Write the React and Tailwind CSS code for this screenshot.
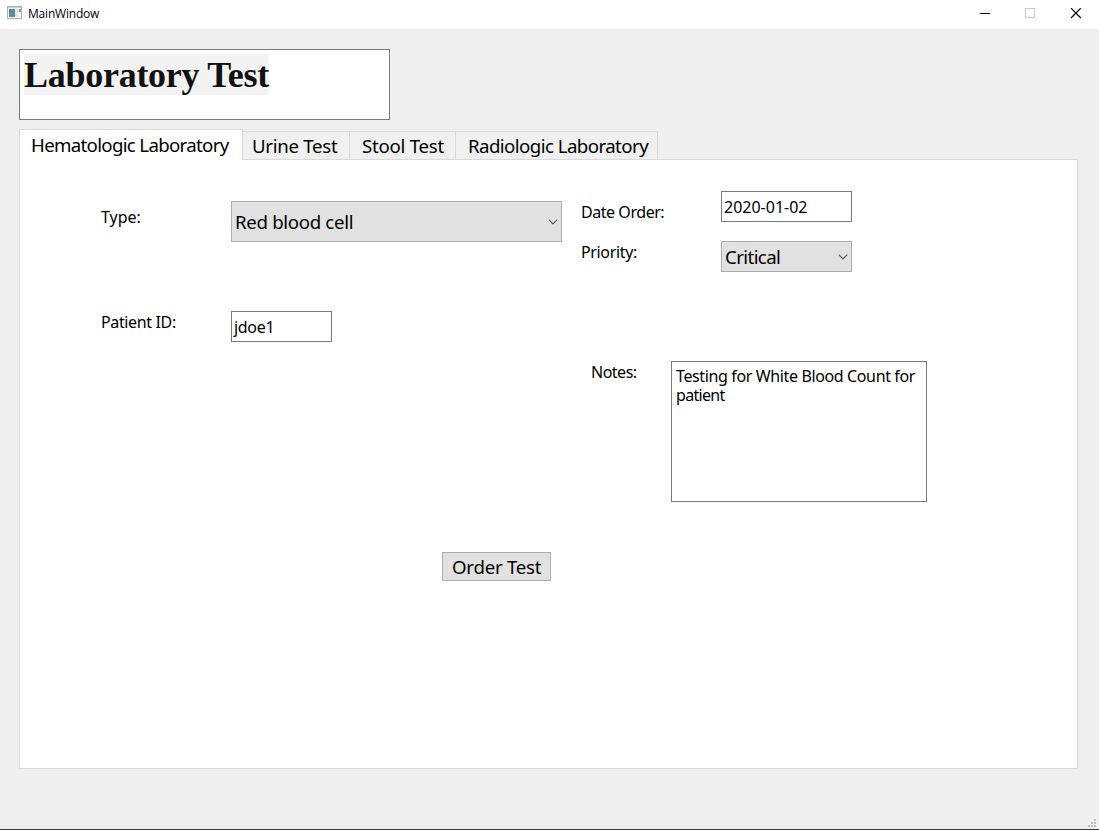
const TABS = [
  { name: "Urine Test", box: "w-[107px] pl-[9px]", text: "tracking-[-0.3px]" },
  { name: "Stool Test", box: "w-[106px] pl-3", text: "tracking-[-0.25px]" },
  { name: "Radiologic Laboratory", box: "w-[202px] pl-3", text: "tracking-[-0.56px]" },
];

function AppIcon() {
  return (
    <svg width="15" height="13" viewBox="0 0 15 13" shapeRendering="crispEdges">
      <rect x="0.5" y="0.5" width="14" height="12" fill="#f4f6f6" stroke="#a9b1b5" />
      <rect x="1" y="1" width="13" height="1" fill="#c9d0d3" />
      <rect x="2" y="3" width="6" height="8" fill="#5f9090" />
      <rect x="2" y="3" width="3" height="3" fill="#5685a0" />
      <rect x="8" y="3" width="3" height="8" fill="#dfe5ea" />
      <rect x="12" y="3" width="2" height="3" fill="#7fa3a8" />
    </svg>
  );
}

function Chevron() {
  return (
    <svg width="10" height="6" viewBox="0 0 10 6" fill="none" stroke="#555" strokeWidth="1.1">
      <path d="M0.8 0.7 L5 4.9 L9.2 0.7" />
    </svg>
  );
}

function TitleBar() {
  return (
    <header className="flex h-[29px] shrink-0 items-start bg-white">
      <div className="pl-[7px] pt-[6px]"><AppIcon /></div>
      <span className="ml-1.5 mt-[6px] font-['Open_Sans',sans-serif] text-[12px] leading-[16px] tracking-[-0.2px]">MainWindow</span>
      <div className="ml-auto flex pr-4 pt-2">
        <svg width="103" height="11" viewBox="0 0 103 11" fill="none">
          <path d="M0 5.5h10" stroke="#000" />
          <rect x="45.5" y="0.5" width="9" height="9" stroke="#c8c8c8" />
          <path d="M91 0.2l9.8 9.8M100.8 0.2L91 10" stroke="#000" strokeWidth="1.2" />
        </svg>
      </div>
    </header>
  );
}

function SizeGrip() {
  return (
    <svg width="8" height="8" viewBox="0 0 8 8" fill="#bfbfbf" shapeRendering="crispEdges">
      <path d="M6 0h2v2H6zM3 3h2v2H3zM6 3h2v2H6zM0 6h2v2H0zM3 6h2v2H3zM6 6h2v2H6z" />
    </svg>
  );
}

export default function App() {
  return (
    <div className="flex h-[830px] w-[1099px] flex-col overflow-hidden border-b border-[#3c3c3c] bg-[#efefef] font-['Noto_Sans',sans-serif] text-[16px] leading-[20px] text-black">
      <TitleBar />
      <h1 className="ml-[19px] mt-5 h-[71px] w-[371px] shrink-0 border border-[#7a7a7a] bg-white pl-1 pt-1 font-['Liberation_Serif',serif] text-[36px] font-bold leading-[41px] text-[#111]">
        <span className="inline-block h-[41px] bg-[#f3f3f3] leading-[43px] tracking-[-0.27px]">Laboratory Test</span>
      </h1>

      <nav className="ml-[19px] mt-[9px] flex h-[30px] shrink-0 items-end whitespace-nowrap text-[18.67px] leading-[28px]">
        <div className="z-10 h-[31px] w-[224px] shrink-0 -mb-px border border-b-0 border-[#d9d9d9] bg-white pl-[11px] pt-px">
          <span className="tracking-[-0.68px]">Hematologic Laboratory</span>
        </div>
        {TABS.map((tab) => (
          <div key={tab.name} className={"h-[28px] shrink-0 border-r border-t border-[#d9d9d9] bg-[#f0f0f0] " + tab.box}>
            <span className={tab.text}>{tab.name}</span>
          </div>
        ))}
      </nav>

      <main className="ml-[19px] flex h-[610px] w-[1059px] shrink-0 flex-col border border-[#d9d9d9] bg-white">
        <div className="flex h-[392px]">
          <section className="w-[561px] pl-[81px] pt-[41px]">
            <div className="flex h-[41px]">
              <label className="w-[130px] pt-[6px]">Type:</label>
              <div className="flex w-[331px] items-center justify-between border border-[#adadad] bg-[#e1e1e1] px-[3px] text-[18.67px]">
                <span className="tracking-[-0.33px]">Red blood cell</span>
                <Chevron />
              </div>
            </div>
            <div className="mt-[69px] flex h-[31px]">
              <label className="w-[130px] pt-px tracking-[-0.36px]">Patient ID:</label>
              <div className="flex w-[101px] items-center border border-[#7a7a7a] pl-[2px] pt-px tracking-[-0.3px]">jdoe1</div>
            </div>
          </section>
          <section className="pt-[31px]">
            <div className="flex h-[31px]">
              <label className="w-[140px] pt-[11px] tracking-[-0.45px]">Date Order:</label>
              <div className="flex w-[131px] items-center border border-[#7a7a7a] pl-[2px] pt-px">2020-01-02</div>
            </div>
            <div className="mt-[19px] flex h-[31px]">
              <label className="w-[140px] pt-px tracking-[-0.35px]">Priority:</label>
              <div className="flex w-[131px] items-center justify-between border border-[#adadad] bg-[#e1e1e1] px-[3px] text-[18.67px]">
                <span className="tracking-[-0.6px]">Critical</span>
                <Chevron />
              </div>
            </div>
            <div className="ml-2.5 mt-[89px] flex h-[141px]">
              <label className="w-[80px] pt-px tracking-[-0.5px]">Notes:</label>
              <p className="w-[256px] whitespace-nowrap border border-[#7a7a7a] pl-1 pt-[5px] leading-[19px]">
                <span className="tracking-[-0.37px]">Testing for White Blood Count for</span>
                <br />
                <span className="tracking-[-0.7px]">patient</span>
              </p>
            </div>
          </section>
        </div>
        <button className="ml-[422px] flex h-[29px] w-[109px] items-center whitespace-nowrap border border-[#adadad] bg-[#e1e1e1] pl-[9px] pt-px text-[18.67px]">
          <span className="tracking-[-0.25px]">Order Test</span>
        </button>
      </main>
      <footer className="mt-auto flex justify-end pb-0.5 pr-[3px]"><SizeGrip /></footer>
    </div>
  );
}
